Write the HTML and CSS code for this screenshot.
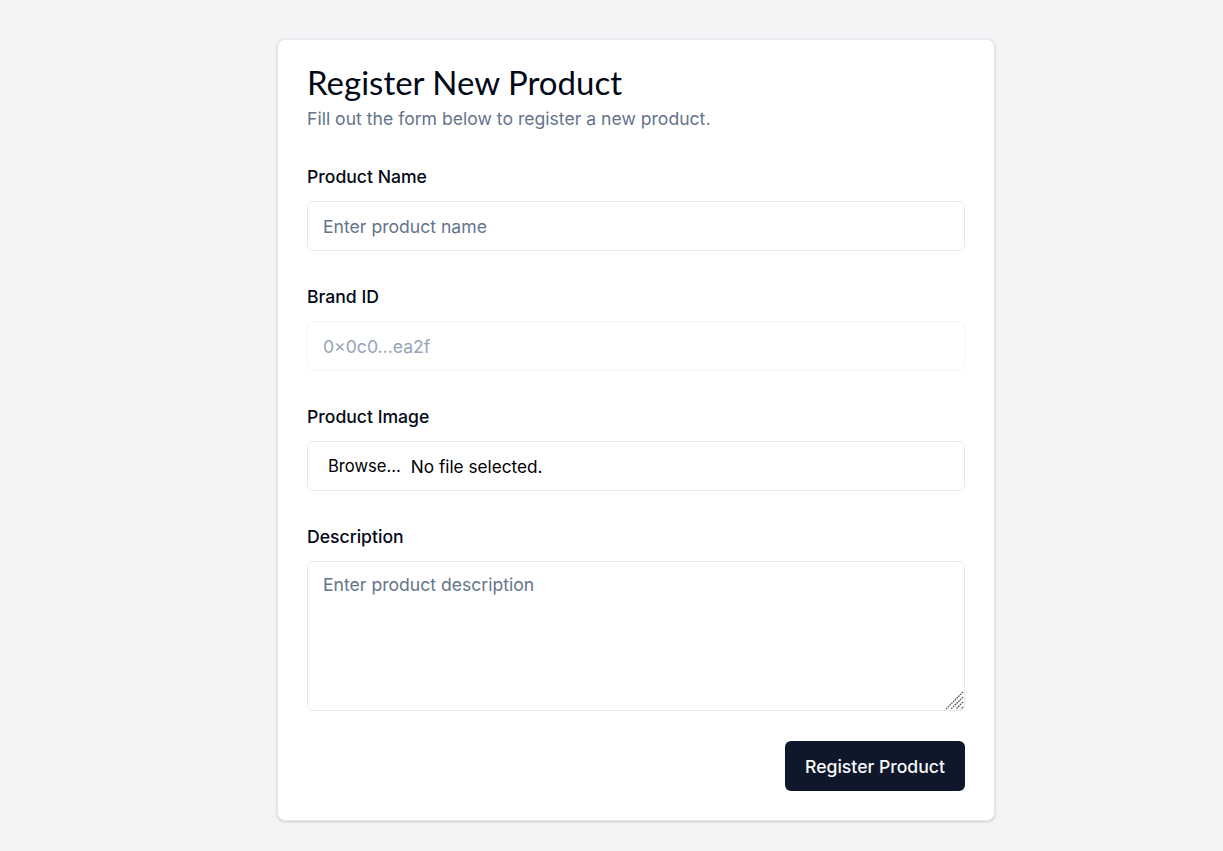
FILE: index.html
```html
<!DOCTYPE html>
<html lang="en">
<head>
<meta charset="utf-8">
<title>Register New Product</title>
<link rel="stylesheet" href="styles.css">
</head>
<body>
<main class="page">
  <form class="card">
    <header class="card-header">
      <h1 class="title">Register New Product</h1>
      <p class="subtitle">Fill out the form below to register a new product.</p>
    </header>
    <div class="field">
      <label class="label" for="name">Product Name</label>
      <input class="input" id="name" type="text" placeholder="Enter product name">
    </div>
    <div class="field">
      <label class="label" for="brand">Brand ID</label>
      <input class="input input-disabled" id="brand" type="text" placeholder="0×0c0...ea2f" disabled>
    </div>
    <div class="field">
      <span class="label">Product Image</span>
      <label class="input file-input">
        <span class="file-btn">Browse…</span>
        <span class="file-name">No file selected.</span>
      </label>
    </div>
    <div class="field">
      <label class="label" for="desc">Description</label>
      <div class="textarea-wrap">
        <textarea class="input textarea" id="desc" placeholder="Enter product description"></textarea>
        <svg class="grip" width="20" height="20" viewBox="0 0 20 20" aria-hidden="true">
          <g stroke="#555" stroke-width="1.3" stroke-dasharray="1.6 0.9" fill="none">
            <path d="M19 2 L2 19"/>
            <path d="M19 7 L7 19"/>
            <path d="M19 12 L12 19"/>
            <path d="M19 17 L17 19"/>
          </g>
        </svg>
      </div>
    </div>
    <div class="actions">
      <button class="btn" type="button">Register Product</button>
    </div>
  </form>
</main>
</body>
</html>
```
FILE: styles.css
```css
* { box-sizing: border-box; }
html, body { margin: 0; padding: 0; }
body {
  background: #f3f4f6;
  font-family: Inter, "Noto Sans", sans-serif;
  color: #020817;
}
.page {
  padding: 39px 0 30px 277px;
}
.card {
  width: 718px;
  background: #fff;
  border: 1px solid #e5e7eb;
  border-radius: 8px;
  box-shadow: 0 1px 3px rgba(0,0,0,0.12), 0 1px 2px rgba(0,0,0,0.06);
  padding: 20px 29px 29px;
  display: flex;
  flex-direction: column;
  gap: 34px;
}
.card-header { display: flex; flex-direction: column; gap: 2px; }
.title {
  margin: 0;
  font-family: Lato, "Noto Sans", sans-serif;
  font-weight: 400;
  font-size: 33px;
  line-height: 44px;
  color: #020817;
}
.subtitle {
  margin: 0;
  font-size: 17.6px;
  line-height: 25px;
  color: #64748b;
}
.field { display: flex; flex-direction: column; gap: 12px; }
.label {
  font-size: 17.6px;
  font-weight: 500;
  line-height: 24px;
  color: #020817;
}
.input {
  width: 100%;
  height: 50px;
  border: 1px solid #e2e8f0;
  border-radius: 6px;
  background: #fff;
  padding: 0 15px;
  font-family: Inter, "Noto Sans", sans-serif;
  font-size: 17.6px;
  color: #020817;
  outline: none;
}
.input::placeholder { color: #64748b; }
.input-disabled { border-color: #f1f5f9; }
.input-disabled::placeholder { color: #94a3b8; }
.file-input {
  display: flex;
  align-items: center;
  gap: 10px;
  padding: 0 20px;
  cursor: pointer;
}
.file-btn { font-size: 16.6px; color: #000; }
.file-name { font-size: 17.2px; color: #000; }
.textarea-wrap { position: relative; }
.textarea {
  display: block;
  height: 150px;
  padding: 12px 15px;
  resize: none;
  line-height: 22px;
}
.grip { position: absolute; right: 1px; bottom: 1px; }
.actions { display: flex; justify-content: flex-end; margin-top: -4px; }
.btn {
  height: 50px;
  width: 180px;
  border: 0;
  border-radius: 6px;
  background: #0f172a;
  color: #f8fafc;
  font-family: Inter, "Noto Sans", sans-serif;
  font-size: 17.6px;
  font-weight: 500;
}
```
